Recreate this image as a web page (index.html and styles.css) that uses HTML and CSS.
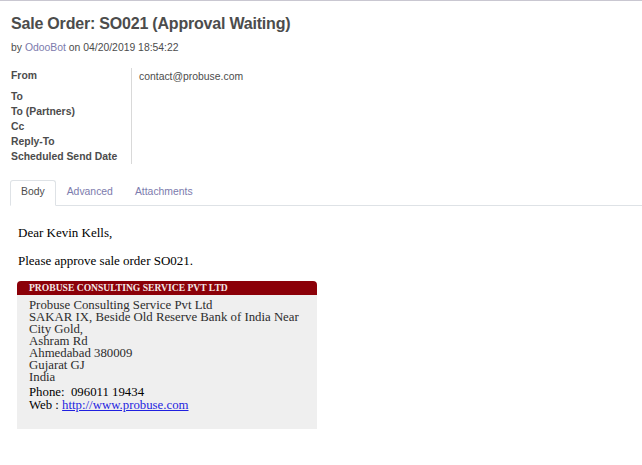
FILE: index.html
```html
<!DOCTYPE html>
<html>
<head>
<meta charset="utf-8">
<link rel="stylesheet" href="styles.css">
</head>
<body>
<div class="page">
  <h1 class="title">Sale Order: SO021 (Approval Waiting)</h1>
  <div class="meta">by <a class="link" href="#">OdooBot</a> on 04/20/2019 18:54:22</div>
  <div class="fields">
    <div class="labels">
      <div class="lbl first">From</div>
      <div class="lbl">To</div>
      <div class="lbl">To (Partners)</div>
      <div class="lbl">Cc</div>
      <div class="lbl">Reply-To</div>
      <div class="lbl">Scheduled Send Date</div>
    </div>
    <div class="values">
      <div class="val">contact@probuse.com</div>
    </div>
  </div>
  <div class="tabs">
    <div class="tab active">Body</div>
    <div class="tab">Advanced</div>
    <div class="tab">Attachments</div>
  </div>
  <div class="mail">
    <p class="para">Dear Kevin Kells,</p>
    <p class="para">Please approve sale order SO021.</p>
    <div class="card">
      <div class="card-head">PROBUSE CONSULTING SERVICE PVT LTD</div>
      <div class="card-body">
        <div class="addr">Probuse Consulting Service Pvt Ltd<br>SAKAR IX, Beside Old Reserve Bank of India Near City Gold,<br>Ashram Rd<br>Ahmedabad 380009<br>Gujarat GJ<br>India</div>
        <div class="contact">Phone:&nbsp; 096011 19434<br>Web : <a class="web" href="#">http://www.probuse.com</a></div>
      </div>
    </div>
  </div>
</div>
</body>
</html>
```
FILE: styles.css
```css
html, body { margin: 0; padding: 0; background: #fff; }
body { font-family: "Liberation Sans", Arial, sans-serif; color: #4c4c4c; }
.page { border-top: 1px solid #c9c7d1; padding: 0 0 0 11px; }
.title { font-size: 16px; letter-spacing: -0.2px; font-weight: bold; color: #4c4c4c; margin: 12px 0 0 0; line-height: 21px; }
.meta { font-size: 10.4px; color: #4c4c4c; margin-top: 6px; line-height: 15px; }
.link { color: #7c7bad; text-decoration: none; }
.fields { display: flex; margin-top: 13px; font-size: 10.4px; line-height: 15px; }
.labels { width: 120px; }
.lbl { font-weight: bold; color: #4c4c4c; }
.lbl.first { margin-bottom: 6px; }
.values { border-left: 1px solid #d9d9d9; padding-left: 7px; }
.val { color: #4c4c4c; padding-top: 1px; }
.tabs { display: flex; margin: 16px 0 0 -1px; border-bottom: 1px solid #dee2e6; font-size: 10.4px; }
.tab { padding: 4px 10px 6px 10px; color: #7c7bad; border: 1px solid transparent; border-bottom: none; line-height: 14px; margin-bottom: -1px; }
.tab.active { color: #4c4c4c; border-color: #dee2e6; border-radius: 3px 3px 0 0; background: #fff; border-bottom: 1px solid #fff; }
.mail { padding: 19px 0 0 7px; font-family: "Liberation Serif", serif; font-size: 13px; color: #000; }
.para { margin: 0 0 13px 0; line-height: 15px; }
.card { width: 300px; margin-top: 8px; margin-left: -1px; }
.card-head { background: #8b0008; color: #f2e6e6; font-weight: bold; font-size: 9.6px; line-height: 14px; padding: 0 0 0 12px; border-radius: 4px 4px 0 0; }
.card-body { background: #efefef; padding: 4px 12px 17px 12px; color: #222; font-size: 12.8px; }
.addr { line-height: 12px; color: #2d2d2d; }
.contact { margin-top: 3px; line-height: 13px; color: #000; }
.web { color: #1f1fe0; }
```
